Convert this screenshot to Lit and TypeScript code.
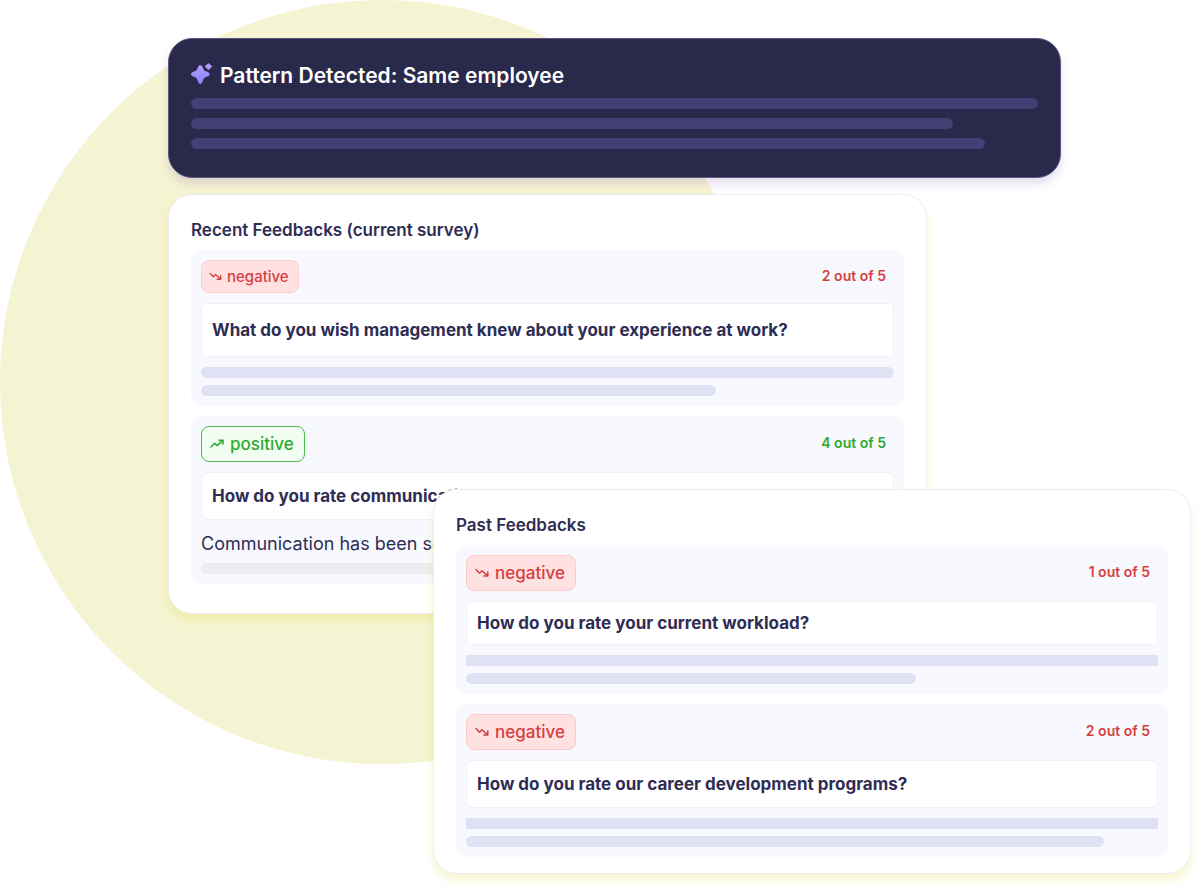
import { LitElement, html, css, svg, nothing } from "lit";
import { customElement, property } from "lit/decorators.js";
import { classMap } from "lit/directives/class-map.js";
import { styleMap } from "lit/directives/style-map.js";

type Mood = "negative" | "positive";

interface Line {
  width: number;
  square?: boolean;
  muted?: boolean;
}

interface Feedback {
  mood: Mood;
  score: number;
  question: string;
  size: "tall" | "medium" | "short";
  smallBadge?: boolean;
  answer?: string;
  lines: Line[];
}

const recent: Feedback[] = [
  {
    mood: "negative",
    score: 2,
    question: "What do you wish management knew about your experience at work?",
    size: "tall",
    smallBadge: true,
    lines: [{ width: 100 }, { width: 74.3 }],
  },
  {
    mood: "positive",
    score: 4,
    question: "How do you rate communication?",
    size: "medium",
    answer: "Communication has been so",
    lines: [{ width: 100, muted: true }],
  },
];

const past: Feedback[] = [
  {
    mood: "negative",
    score: 1,
    question: "How do you rate your current workload?",
    size: "short",
    lines: [{ width: 100, square: true }, { width: 65 }],
  },
  {
    mood: "negative",
    score: 2,
    question: "How do you rate our career development programs?",
    size: "medium",
    lines: [{ width: 100, square: true }, { width: 92.2 }],
  },
];

const trendDown = svg`<path d="M1 1.5 L4.6 5.2 L7 2.8 L12.4 7.6 M12.8 4 V8 H8.8"/>`;
const trendUp = svg`<path d="M1 8 L4.6 4.2 L7.2 6.6 L12.6 1.6 M9 1.2 H13 V5.2"/>`;

@customElement("feedback-item")
export class FeedbackItem extends LitElement {
  @property({ attribute: false }) item!: Feedback;

  static styles = css`
    :host {
      display: block;
      padding: 10px;
      border-radius: 10px;
      background: #f8f9fe;
    }
    .top {
      display: flex;
      align-items: center;
      justify-content: space-between;
      padding-right: 8px;
      margin-bottom: 10px;
    }
    .badge {
      display: flex;
      align-items: center;
      box-sizing: border-box;
      gap: 6px;
      height: 36px;
      padding: 0 10px 0 8px;
      border: 1px solid;
      border-radius: 8px;
      font-size: 17px;
      font-weight: 500;
      line-height: 24px;
    }
    .badge.small {
      height: 33px;
      gap: 5px;
      padding: 0 9px 0 7px;
      font-size: 15px;
    }
    .badge svg {
      width: 14px;
      height: 10px;
      fill: none;
      stroke: currentColor;
      stroke-width: 1.5;
      stroke-linecap: round;
      stroke-linejoin: round;
    }
    .badge.small svg {
      width: 13px;
      height: 9px;
    }
    .badge.negative {
      color: #d63f3f;
      background: #ffe1e2;
      border-color: #ffcaca;
    }
    .badge.positive {
      color: #2faa2f;
      background: #f3fef2;
      border-color: #4dbb4d;
    }
    .score {
      font-size: 14px;
      font-weight: 600;
      line-height: 20px;
      padding-bottom: 2px;
    }
    .score.negative {
      color: #d63f3f;
    }
    .score.positive {
      color: #2faa2f;
    }
    .question {
      display: flex;
      align-items: center;
      box-sizing: border-box;
      margin: 0 0 10px;
      padding: 0 10px;
      border: 1px solid #f0f0fa;
      border-radius: 6px;
      background: #fff;
      font-size: 17px;
      font-weight: 700;
      line-height: 24px;
      white-space: nowrap;
    }
    .tall {
      min-height: 54px;
    }
    .medium {
      min-height: 48px;
    }
    .short {
      min-height: 44px;
    }
    .answer {
      margin: 12px 0 7px;
      font-size: 18px;
      font-weight: 400;
      line-height: 24px;
    }
    .lines {
      display: flex;
      flex-direction: column;
      gap: 7px;
    }
    .line {
      height: 11px;
      border-radius: 6px;
      background: #e1e1f5;
    }
    .line.square {
      border-radius: 0;
    }
    .line.muted {
      background: #ecedf2;
    }
  `;

  render() {
    const { mood, score, question, size, smallBadge, answer, lines } = this.item;
    return html`
      <div class="top">
        <span class=${classMap({ badge: true, small: !!smallBadge, [mood]: true })}>
          <svg viewBox="0 0 14 10" aria-hidden="true">
            ${mood === "negative" ? trendDown : trendUp}
          </svg>
          ${mood}
        </span>
        <span class="score ${mood}">${score} out of 5</span>
      </div>
      <h3 class="question ${size}">${question}</h3>
      ${answer ? html`<p class="answer">${answer}</p>` : nothing}
      <div class="lines">
        ${lines.map(
          (l) => html`<div
            class=${classMap({ line: true, square: !!l.square, muted: !!l.muted })}
            style=${styleMap({ width: `${l.width}%` })}
          ></div>`
        )}
      </div>
    `;
  }
}

@customElement("app-root")
export class AppRoot extends LitElement {
  static styles = css`
    :host {
      display: block;
      font-family: Inter, "Liberation Sans", sans-serif;
      color: #2f2d54;
      background: #fff;
    }
    .stage {
      position: relative;
      z-index: 0;
      box-sizing: border-box;
      min-height: 100vh;
      padding: 38px 0 18px;
      overflow: hidden;
    }
    .disc {
      position: absolute;
      z-index: -1;
      top: 0;
      left: 0;
      width: 764px;
      aspect-ratio: 1;
      border-radius: 50%;
      background: #f5f4d2;
    }
    .pattern {
      box-sizing: border-box;
      margin: 0 139px 16px 14%;
      padding: 24px 22px 28px;
      border: 1px solid #5a5880;
      border-radius: 24px;
      background: #29294b;
      box-shadow: 0 6px 8px rgba(120, 70, 170, 0.18);
      color: #fff;
    }
    .title {
      display: flex;
      align-items: center;
      gap: 7px;
      margin: 0 0 9px;
      font-size: 21px;
      font-weight: 600;
      line-height: 26px;
    }
    .title svg {
      width: 22px;
      height: 22px;
      margin-top: -4px;
    }
    .bars {
      display: flex;
      flex-direction: column;
      gap: 9px;
    }
    .bar {
      height: 11px;
      border-radius: 6px;
      background: #413f73;
    }
    .card {
      position: relative;
      box-sizing: border-box;
      padding: 23px 22px 29px;
      border: 1px solid #ececf8;
      border-radius: 24px;
      background: #fff;
      box-shadow: 0 6px 8px rgba(218, 214, 50, 0.25);
    }
    .recent {
      margin: 0 273px 0 14%;
    }
    .past {
      margin: -125px 9px 0 calc(36% + 1px);
      padding-bottom: 16px;
    }
    .heading {
      margin: 0 0 8px;
      font-size: 17px;
      font-weight: 600;
      line-height: 24px;
    }
    .items {
      display: grid;
      gap: 10px;
    }
  `;

  private card(name: string, heading: string, items: Feedback[]) {
    return html`
      <section class="card ${name}">
        <h2 class="heading">${heading}</h2>
        <div class="items">
          ${items.map((item) => html`<feedback-item .item=${item}></feedback-item>`)}
        </div>
      </section>
    `;
  }

  render() {
    return html`
      <main class="stage">
        <div class="disc"></div>
        <section class="pattern">
          <h1 class="title">
            <svg viewBox="0 0 22 22" aria-hidden="true">
              <defs>
                <linearGradient id="spark" x1="0" y1="0" x2="0" y2="1">
                  <stop offset="0" stop-color="#b79afc" />
                  <stop offset="1" stop-color="#8285f7" />
                </linearGradient>
              </defs>
              <path
                fill="url(#spark)"
                d="M9.3 2.2 C10.8 2.2 11.4 3.4 12 5 C12.8 7.2 13.4 7.8 15.6 8.6 C17.6 9.4 18.6 10 18.6 11.2 C18.6 12.4 17.6 13 15.6 13.7 C13.4 14.5 12.8 15.2 12 17.4 C11.2 19.5 10.6 21 9.3 21 C8 21 7.4 19.5 6.6 17.4 C5.8 15.2 5.2 14.5 3 13.7 C1 13 0 12.4 0 11.2 C0 10 1 9.4 3 8.6 C5.2 7.8 5.8 7.2 6.6 5 C7.2 3.4 7.8 2.2 9.3 2.2 Z"
              />
              <path
                fill="#b79afc"
                d="M17.5 .2 C18.4 .2 18.7 1.3 19.3 1.8 C19.9 2.3 20.9 2.6 20.9 3.5 C20.9 4.4 19.9 4.7 19.3 5.2 C18.7 5.7 18.4 6.8 17.5 6.8 C16.6 6.8 16.3 5.7 15.7 5.2 C15.1 4.7 14.1 4.4 14.1 3.5 C14.1 2.6 15.1 2.3 15.7 1.8 C16.3 1.3 16.6 .2 17.5 .2 Z"
              />
            </svg>
            Pattern Detected: Same employee
          </h1>
          <div class="bars">
            ${[100, 90, 93.8].map(
              (w) => html`<div class="bar" style=${styleMap({ width: `${w}%` })}></div>`
            )}
          </div>
        </section>
        ${this.card("recent", "Recent Feedbacks (current survey)", recent)}
        ${this.card("past", "Past Feedbacks", past)}
      </main>
    `;
  }
}
